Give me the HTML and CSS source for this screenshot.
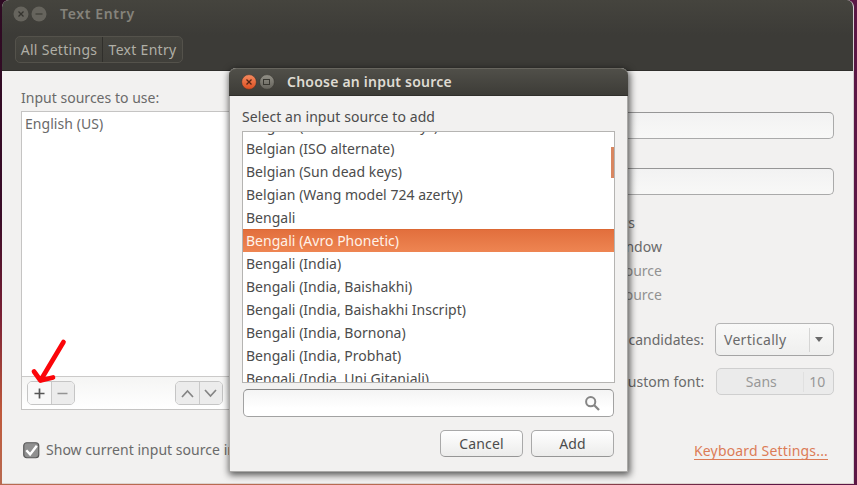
FILE: index.html
```html
<!DOCTYPE html>
<html lang="en">
<head>
<meta charset="utf-8">
<title>Text Entry</title>
<link rel="stylesheet" href="styles.css">
</head>
<body>
<div class="window">
  <header class="chrome">
    <div class="titlebar">
      <svg class="wm" width="34" height="16" viewBox="0 0 34 16">
        <circle cx="8" cy="8" r="7.5" fill="#66645d"/><path d="M5.5 5.5l5 5m0-5l-5 5" stroke="#35342f" stroke-width="1.3"/>
        <circle cx="26" cy="8" r="7.5" fill="#66645d"/><path d="M22.5 8h7" stroke="#35342f" stroke-width="1.2"/>
      </svg>
      <h1 class="title main-title">Text Entry</h1>
    </div>
    <nav class="crumbs"><span class="crumb c1"><span>All Settings</span></span><span class="crumb c2"><span>Text Entry</span></span></nav>
  </header>
  <main class="content">
    <section class="left">
      <div class="label">Input sources to use:</div>
      <div class="sources">
        <div class="source-list"><span class="english">English (US)</span></div>
        <div class="tools">
          <div class="pair"><button class="tool on"><svg width="11" height="11"><path d="M5.5 .5v10M.5 5.5h10" stroke="#555" stroke-width="1.7"/></svg></button><button class="tool"><svg width="11" height="11"><path d="M.5 5.5h10" stroke="#949494" stroke-width="1.6"/></svg></button></div>
          <div class="pair"><button class="tool"><svg width="13" height="9"><path d="M1 8l5.5-6L12 8" fill="none" stroke="#858585" stroke-width="1.7"/></svg></button><button class="tool"><svg width="13" height="9"><path d="M1 1l5.5 6L12 1" fill="none" stroke="#858585" stroke-width="1.7"/></svg></button></div>
        </div>
      </div>
      <div class="check"><svg width="17" height="17"><rect x=".75" y=".75" width="15" height="15" rx="3" fill="#909090" stroke="#575757" stroke-width="1.2"/><path d="M3.3 8.2l3.8 4.2 6.7-8.6" fill="none" stroke="#fff" stroke-width="2.4"/></svg><span class="show">Show current input source in</span></div>
    </section>
    <section class="right">
      <div class="entry"></div>
      <div class="entry"></div>
      <div class="options">
        <div class="option windows">windows</div>
        <div class="option">window</div>
        <div class="option dim">source</div>
        <div class="option dim">source</div>
      </div>
      <div class="field"><span class="cand">candidates:</span><div class="combo"><span class="vert">Vertically</span><i class="arrow"></i></div></div>
      <div class="field second"><span class="cust">custom font:</span><div class="font"><span class="face">Sans</span><span class="size">10</span></div></div>
      <a class="link">Keyboard Settings...</a>
    </section>
  </main>
</div>

<div class="dialog">
  <header class="dialog-bar">
    <svg class="wm" width="34" height="16" viewBox="0 0 34 16">
      <defs><linearGradient id="o" x2="0" y2="1"><stop stop-color="#f58b60"/><stop offset="1" stop-color="#dc4e20"/></linearGradient><linearGradient id="g" x2="0" y2="1"><stop stop-color="#929087"/><stop offset="1" stop-color="#64625b"/></linearGradient></defs>
      <circle cx="8" cy="8" r="7.4" fill="url(#o)" stroke="#35342f" stroke-width=".6"/><path d="M5.5 5.5l5 5m0-5l-5 5" stroke="#542414" stroke-width="1.3"/>
      <circle cx="26" cy="8" r="7.4" fill="url(#g)" stroke="#35342f" stroke-width=".6"/><rect x="22.5" y="5.5" width="6" height="5" fill="none" stroke="#383731"/>
    </svg>
    <h2 class="title">Choose an input source</h2>
  </header>
  <div class="dialog-body">
    <div class="prompt">Select an input source to add</div>
    <div class="list">
      <div class="row r0"><span>Belgian (Eliminate dead keys)</span></div>
      <div class="row"><span>Belgian (ISO alternate)</span></div>
      <div class="row"><span>Belgian (Sun dead keys)</span></div>
      <div class="row"><span>Belgian (Wang model 724 azerty)</span></div>
      <div class="row"><span>Bengali</span></div>
      <div class="row selected"><span>Bengali (Avro Phonetic)</span></div>
      <div class="row"><span>Bengali (India)</span></div>
      <div class="row"><span>Bengali (India, Baishakhi)</span></div>
      <div class="row"><span>Bengali (India, Baishakhi Inscript)</span></div>
      <div class="row"><span>Bengali (India, Bornona)</span></div>
      <div class="row"><span>Bengali (India, Probhat)</span></div>
      <div class="row"><span>Bengali (India, Uni Gitanjali)</span></div>
      <i class="thumb"></i>
    </div>
    <div class="search"><svg width="15" height="15"><circle cx="5.7" cy="5.7" r="4.6" fill="none" stroke="#858585" stroke-width="2"/><path d="M9 9l5 5" stroke="#858585" stroke-width="2.3"/></svg></div>
    <div class="actions"><button class="btn">Cancel</button><button class="btn">Add</button></div>
  </div>
</div>

<svg class="pointer" width="40" height="50" viewBox="0 0 40 50"><path d="M33.5 7L10.500 45.500M4 36.500l6.500 9 12.500-3" fill="none" stroke="#fb0509" stroke-width="4.700" stroke-linecap="round" stroke-linejoin="round"/></svg>
</body>
</html>
```
FILE: styles.css
```css
* { box-sizing: border-box; }
body {
  margin: 0; width: 857px; height: 485px; overflow: hidden; position: relative;
  padding: 0 3px 1px 2px;
  background: linear-gradient(90deg, transparent 50%, #5c1745 90%), linear-gradient(#2d0a22 0, #3a0c28 45%, #7a2035 65%, #c05a3c 85%, #b86a50 100%);
  font: 14px/20px "Noto Sans", "Open Sans", sans-serif; letter-spacing: 0.02px; color: #4c4c4c;
}
h1, h2 { margin: 0; }
svg { display: block; flex: none; }
button { font: inherit; letter-spacing: inherit; color: inherit; margin: 0; padding: 0; }
.window { height: 484px; border-radius: 7px 7px 0 0; overflow: hidden; background: #f2f1f0; border-right: 1px solid #d5d0d1; border-bottom: 1px solid #ddd3cf; color: #6a6a6a; }
.chrome { height: 71px; margin-right: -1px; background: linear-gradient(#45443e, #3c3b37 35px); border-bottom: 1px solid #2f2e2b; }
.titlebar { height: 29px; display: flex; align-items: center; padding: 0 0 1px 11px; }
.title { font-size: 14px; line-height: 20px; font-weight: 600; color: #85837b; letter-spacing: 0.22px; margin-left: 12px; white-space: nowrap; }
.main-title { margin-left: 13px; letter-spacing: 0.65px; }
.crumbs { display: flex; width: 168px; height: 27px; margin: 7px 0 0 13px; border: 1px solid #54524b; border-radius: 5px; background: linear-gradient(#46453f, #403f3a); color: #b0afa6; letter-spacing: 0.3px; }
.crumb { display: flex; justify-content: center; align-items: center; white-space: nowrap; }
.c1 { width: 87px; border-right: 1px solid #302f2b; }
.c2 { flex: 1; }
.content { display: flex; justify-content: space-between; }
.left { width: 250px; padding: 17px 0 0 19px; }
.label { height: 23px; white-space: nowrap; }
.sources { height: 299px; border: 1px solid #c5c4c3; background: #fff; }
.source-list { height: 264px; padding: 2px 3px; }
.english { letter-spacing: 0.05px; }
.tools { height: 33px; border-top: 1px solid #cbcac9; background: linear-gradient(#f5f5f4, #fff); display: flex; padding: 4px 5px; gap: 100px; }
.pair { display: flex; width: 48px; height: 24px; border: 1px solid #c5c5c5; border-radius: 5px; overflow: hidden; }
.tool { flex: 1; border: 0; background: #ececec; display: flex; align-items: center; justify-content: center; }
.tool + .tool { border-left: 1px solid #c9c9c9; }
.tool.on { background: #f8f8f8; }
.check { display: flex; align-items: center; gap: 6px; margin: 30px 0 0 2px; white-space: nowrap; letter-spacing: 0.03px; }
.right { width: 232px; padding: 41px 19px 0 0; display: flex; flex-direction: column; }
.entry { height: 27px; margin-bottom: 29px; border: 1px solid #aaa; border-top-color: #969696; border-radius: 5px; background: linear-gradient(#f2f2f2, #f8f8f7); }
.options { margin-top: -14px; height: 113px; padding-top: 1px; }
.option { height: 24px; line-height: 24px; width: 41px; display: flex; justify-content: flex-end; }
.option.windows { width: 14px; }
.option.dim { color: #929292; }
.field { display: flex; justify-content: flex-end; align-items: center; gap: 11px; white-space: nowrap; height: 33px; }
.combo { width: 119px; height: 33px; border: 1px solid #b5b5b5; border-bottom-color: #a4a4a4; border-radius: 5px; background: linear-gradient(#f9f9f8, #efefee); display: flex; align-items: center; padding-left: 8px; letter-spacing: 0.3px; }
.vert { width: 86px; border-right: 1px solid #d5d5d4; line-height: 24px; }
.arrow { margin-left: 5px; border: 4.5px solid transparent; border-top: 5.5px solid #6a6a6a; border-bottom: 0; }
.second { height: 27px; margin-top: 12px; gap: 12px; }
.font { width: 119px; height: 27px; border: 1px solid #cfcfcf; border-radius: 5px; background: #ebebeb; color: #989898; display: flex; align-items: center; }
.face { width: 87px; padding-left: 2px; text-align: center; border-right: 1px solid #e0e0e0; }
.size { padding-left: 5px; }
.link { align-self: flex-end; margin: 47px 6px 0 0; color: #dc7c57; border-bottom: 1px solid #dc7c57; line-height: 18px; height: 18px; white-space: nowrap; letter-spacing: 0.17px; }

.dialog { position: absolute; left: 229px; top: 68px; width: 399px; height: 404px; border-radius: 7px 7px 0 0; background: #f2f1f0; border: 1px solid #aaa9a7; border-top: 0; box-shadow: 1px 2px 7px 1px rgba(0,0,0,.65); }
.dialog-bar { height: 28px; margin: 0 -1px; display: flex; align-items: center; padding-left: 12px; border-radius: 7px 7px 0 0; background: linear-gradient(#504f49, #3d3c37); border-top: 1px solid #67655e; border-bottom: 1px solid #302f2b; }
.dialog .title { color: #dfdbd2; }
.dialog-body { padding: 11px 13px 0 12px; }
.prompt { height: 24px; white-space: nowrap; letter-spacing: 0.08px; }
.list { height: 252px; width: 373px; border: 1px solid #b5b4b2; background: #fff; overflow: hidden; position: relative; }
.row { height: 23px; line-height: 22px; padding-left: 3px; white-space: nowrap; }
.r0 { margin-top: -17px; }
.selected { margin: -1px 0 1px; color: #fff2e8; background: linear-gradient(#e26f3d, #ee8552); border-top: 1px solid #dc6834; }
.thumb { position: absolute; right: 0; top: 15px; width: 3px; height: 31px; background: #d88660; }
.search { height: 28px; width: 371px; margin: 6px 0 0 1px; border: 1px solid #a2a2a2; border-top-color: #858585; border-radius: 5px; background: linear-gradient(#f4f4f4, #fff 70%); display: flex; align-items: center; justify-content: flex-end; padding-right: 13px; }
.actions { display: flex; justify-content: flex-end; gap: 8px; margin-top: 13px; }
.btn { width: 83px; height: 27px; letter-spacing: 0.15px; border: 1px solid #a9a9a9; border-bottom-color: #969696; border-radius: 5px; background: linear-gradient(#fff, #ececeb); }
.pointer { position: absolute; left: 30px; top: 335px; }
```
